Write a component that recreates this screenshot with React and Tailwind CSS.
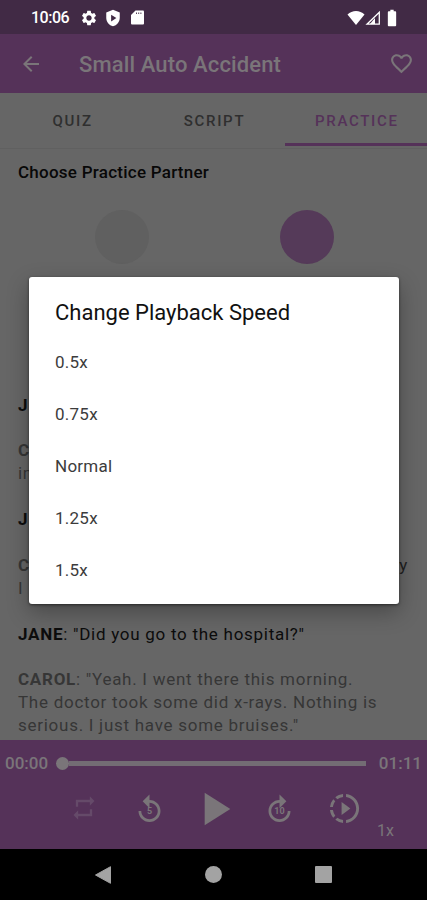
import {
    MdArrowBack,
    MdBatteryFull,
    MdFavoriteBorder,
    MdPlayArrow,
    MdRepeat,
    MdReplay,
    MdSettings,
    MdSlowMotionVideo,
} from 'react-icons/md';

const speeds = ['0.5x', '0.75x', 'Normal', '1.25x', '1.5x'];

const StatusBar = () => (
    <div className="h-[34px] shrink-0 bg-[#412a45] flex items-center justify-between pl-[31px] pr-[25px] pt-[1px] text-white">
        <div className="flex items-center">
            <span className="w-[49px] text-[16px] font-medium leading-none tracking-[-0.5px]">10:06</span>
            <MdSettings className="size-[18px]" />
            <svg viewBox="0 0 24 24" className="ml-[6px] size-[18px]" fill="currentColor">
                <path fillRule="evenodd" d="M12 1 3 4.500v7c0 5.500 3.800 10 9 11.500 5.200-1.500 9-6 9-11.500v-7zM9.500 7.500v9l7-4.500z" />
            </svg>
            <svg viewBox="0 0 13 15" className="ml-[9px] w-[13px] h-[15px]" fill="currentColor">
                <path d="M4.500.5H12a1 1 0 0 1 1 1v12a1 1 0 0 1-1 1H1a1 1 0 0 1-1-1V5z" />
                <path d="M5.500 2.500v1.500M7.700 2.500v1.500M9.900 2.500v1.500" stroke="#412a45" strokeWidth=".9" />
            </svg>
        </div>
        <div className="flex items-center">
            <svg viewBox="0 0 18 16" className="w-[18px] h-[16px]" fill="currentColor">
                <path d="M9 15 .5 4.500C5-.2 13-.2 17.500 4.500z" />
            </svg>
            <svg viewBox="0 0 16 16" className="size-[16px]" fill="none" stroke="currentColor">
                <path d="M14.300 2.200v12H2z" strokeWidth="1.300" />
                <path d="M10 8v6H5z" fill="currentColor" stroke="none" />
            </svg>
            <MdBatteryFull className="ml-[1px] size-[20px]" />
        </div>
    </div>
);

const Header = () => (
    <div className="h-[59px] shrink-0 bg-[#553259] text-[#7a7579] flex items-center pl-[19px] pr-[13px]">
        <MdArrowBack className="size-[24px]" />
        <h1 className="ml-[36px] mt-[2px] flex-1 text-[22px] font-medium leading-none tracking-[0.120px] whitespace-nowrap">Small Auto Accident</h1>
        <MdFavoriteBorder className="size-[25px]" />
    </div>
);

const Tabs = () => (
    <div className="h-[56px] shrink-0 grid grid-cols-3 text-[15px] font-medium tracking-[1.700px] text-[#2f2f2f] border-b border-[#606060]">
        <div className="h-[53px] flex items-center justify-center pl-[3px] pt-[3px]">QUIZ</div>
        <div className="h-[53px] flex items-center justify-center pl-[2px] pt-[3px]">SCRIPT</div>
        <div className="h-[53px] flex items-center justify-center border-b-[3px] border-[#553259] pl-[2px] pt-[6px] text-[#553259]">PRACTICE</div>
    </div>
);

const Line = ({ name, active, children }) => (
    <p className={active ? 'mb-[22.900px] text-[#0c0c0c]' : 'mb-[22.900px] text-[#363636]'}>
        <span className="font-bold">{name}</span>
        {children}
    </p>
);

const Transcript = () => (
    <div className="mt-[129.500px] pl-[18px] pr-[19px] text-[17px] leading-[22.900px] tracking-[0.730px] whitespace-nowrap">
        <Line name="J" active />
        <Line name="C"><br />in</Line>
        <Line name="J" active />
        <div className="relative">
            <Line name="C"><br />I</Line>
            <span className="absolute right-0 top-0 text-[#202020]">y</span>
        </div>
        <Line name="JANE" active>: "Did you go to the hospital?"</Line>
        <Line name="CAROL">
            : "Yeah. I went there this morning.
            <br />
            The doctor took some did x-rays. Nothing is
            <br />
            serious. I just have some bruises."
        </Line>
    </div>
);

const SkipButton = ({ seconds, forward }) => (
    <div className="relative size-[33px]">
        <MdReplay className={forward ? 'size-full -scale-x-100' : 'size-full'} />
        <span className="absolute inset-x-0 top-[14px] text-center text-[9px] font-bold leading-none">{seconds}</span>
    </div>
);

const Player = () => (
    <div className="h-[109px] shrink-0 bg-[#553259] text-[#7a7579]">
        <div className="h-[47px] flex items-center justify-between px-[5px] text-[17px] font-medium">
            <span className="pt-[1px]">00:00</span>
            <div className="flex flex-1 items-center ml-[8px] mr-[13px]">
                <div className="size-[13px] rounded-full bg-[#7a7579]" />
                <div className="h-[5px] flex-1 bg-[#736c74]" />
            </div>
            <span className="pt-[1px]">01:11</span>
        </div>
        <div className="flex h-[44px] items-center pl-[70px]">
            <MdRepeat className="size-[28px] -mt-[2px] text-[#654a69]" />
            <div className="ml-[35px]"><SkipButton seconds="5" /></div>
            <MdPlayArrow className="ml-[20px] size-[56px]" />
            <div className="ml-[21px]"><SkipButton seconds="10" forward /></div>
            <MdSlowMotionVideo className="ml-[31px] size-[35px] -mt-[2px]" />
            <span className="ml-[15px] mt-[43px] text-[16px] leading-none">1x</span>
        </div>
    </div>
);

const NavBar = () => (
    <div className="h-[51px] shrink-0 bg-black text-[#a3a3a3] flex items-center pl-[95px]">
        <svg viewBox="0 0 16 18" className="w-[16px] h-[18px]" fill="currentColor">
            <path d="M15.500.7v16.600L.5 9z" stroke="currentColor" strokeLinejoin="round" />
        </svg>
        <div className="ml-[94px] size-[17px] rounded-full bg-[#a3a3a3]" />
        <div className="ml-[93px] size-[17px] rounded-[1px] bg-[#a3a3a3]" />
    </div>
);

const SpeedDialog = () => (
    <div className="absolute left-[29px] top-[277px] w-[370px] h-[327px] rounded-[3px] bg-white pl-[26px] shadow-[0_8px_22px_rgba(0,0,0,0.3),0_1px_3px_rgba(0,0,0,0.5)]">
        <h2 className="pt-[23px] mb-[10px] text-[22px] leading-[26px] text-[#111] whitespace-nowrap">Change Playback Speed</h2>
        <ul>
            {speeds.map((speed) => (
                <li key={speed} className="h-[52.100px] flex items-center pt-[1px] text-[17px] tracking-[0.250px] text-[#3c3c3c]">{speed}</li>
            ))}
        </ul>
    </div>
);

const App = () => {
    return (
        <div className="relative w-[427px] h-[900px] overflow-hidden flex flex-col bg-[#666] font-['Roboto',sans-serif]">
            <StatusBar />
            <Header />
            <Tabs />
            <div className="flex-1 min-h-0 overflow-hidden">
                <h3 className="h-[46px] flex items-center pl-[18px] pt-[1px] text-[17px] font-medium tracking-[0.250px] text-[#080808]">Choose Practice Partner</h3>
                <div className="mt-[15px] flex pl-[94.500px] gap-[131px]">
                    <div className="size-[54px] rounded-full bg-[#606060]" />
                    <div className="size-[54px] rounded-full bg-[#553a59]" />
                </div>
                <Transcript />
            </div>
            <Player />
            <NavBar />
            <SpeedDialog />
        </div>
    );
};

export default App;
